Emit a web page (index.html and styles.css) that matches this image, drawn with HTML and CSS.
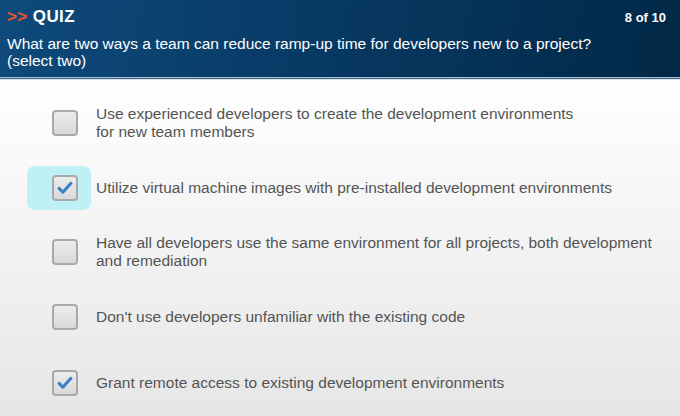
FILE: index.html
```html
<!DOCTYPE html>
<html>
<head>
<meta charset="utf-8">
<link rel="stylesheet" href="styles.css">
</head>
<body>
<header class="head">
  <div class="top">
    <div class="title"><span class="arrows">&gt;&gt;</span> QUIZ</div>
    <div class="count">8 of 10</div>
  </div>
  <div class="question">What are two ways a team can reduce ramp-up time for developers new to a project?<br>(select two)</div>
</header>
<main class="options">
  <div class="opt">
    <div class="boxwrap"><span class="box"></span></div>
    <div class="label">Use experienced developers to create the development environments<br>for new team members</div>
  </div>
  <div class="opt">
    <div class="boxwrap hl"><span class="box"><svg viewBox="0 0 26 26" width="22" height="22"><path d="M6 13.5 L10.5 18 L20 7.5" fill="none" stroke="#3a7fc4" stroke-width="3.6" stroke-linecap="round" stroke-linejoin="round"/></svg></span></div>
    <div class="label">Utilize virtual machine images with pre-installed development environments</div>
  </div>
  <div class="opt short">
    <div class="boxwrap"><span class="box"></span></div>
    <div class="label">Have all developers use the same environment for all projects, both development<br>and remediation</div>
  </div>
  <div class="opt tall">
    <div class="boxwrap"><span class="box"></span></div>
    <div class="label">Don't use developers unfamiliar with the existing code</div>
  </div>
  <div class="opt">
    <div class="boxwrap"><span class="box"><svg viewBox="0 0 26 26" width="22" height="22"><path d="M6 13.5 L10.5 18 L20 7.5" fill="none" stroke="#3a7fc4" stroke-width="3.6" stroke-linecap="round" stroke-linejoin="round"/></svg></span></div>
    <div class="label">Grant remote access to existing development environments</div>
  </div>
</main>
</body>
</html>
```
FILE: styles.css
```css
html, body {
  margin: 0;
  padding: 0;
}
body {
  width: 680px;
  height: 416px;
  overflow: hidden;
  font-family: "Liberation Sans", Arial, sans-serif;
  background: linear-gradient(to bottom, #ffffff 80px, #f6f6f6 200px, #e6e6e6 416px);
}
.head {
  height: 78px;
  box-sizing: border-box;
  padding: 7px 14px 0 7px;
  background: linear-gradient(100deg, #0e4a7b 0%, #083a65 45%, #022846 100%);
  border-bottom: 1px solid #a7bfd0;
  box-shadow: 0 1px 0 #3f6987, 0 2px 0 #d9e0e6;
  color: #fff;
}
.top {
  display: flex;
  justify-content: space-between;
  align-items: center;
  height: 20px;
}
.title {
  font-weight: bold;
  font-size: 17px;
  letter-spacing: 0.4px;
}
.arrows {
  color: #f2522a;
}
.count {
  font-weight: bold;
  font-size: 13px;
}
.question {
  margin-top: 8px;
  font-size: 15.5px;
  line-height: 17px;
}
.options {
  padding-top: 12px;
}
.opt {
  display: flex;
  align-items: center;
  height: 65.5px;
}
.opt.short {
  height: 62.5px;
}
.opt.tall {
  height: 67px;
}
.boxwrap {
  box-sizing: border-box;
  width: 64px;
  height: 44px;
  margin-left: 27px;
  margin-right: 5px;
  padding-left: 25px;
  display: flex;
  align-items: center;
  flex-shrink: 0;
  border-radius: 8px;
}
.boxwrap.hl {
  background: #bff0f6;
}
.box {
  box-sizing: border-box;
  width: 26px;
  height: 26px;
  border: 2px solid #a9a9a9;
  border-radius: 4px;
  background: linear-gradient(to bottom, #ececec, #d9d9d9);
  display: flex;
  align-items: center;
  justify-content: center;
}
.label {
  font-size: 15.5px;
  line-height: 18px;
  color: #545454;
}
```
